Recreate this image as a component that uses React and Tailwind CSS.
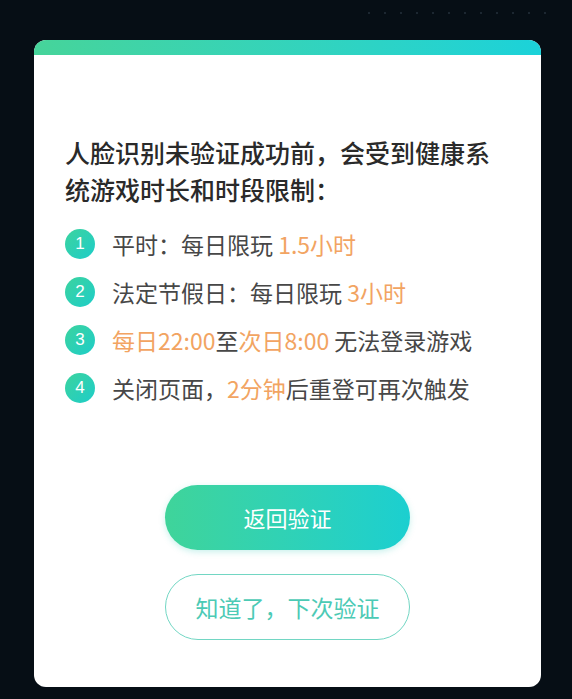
import React from 'react';

const cjk = { fontFamily: '"Noto Sans CJK SC", "Noto Sans", sans-serif' };

const items = [
    { n: 1, parts: [['平时：每日限玩 ', false], ['1.5小时', true]] },
    { n: 2, parts: [['法定节假日：每日限玩 ', false], ['3小时', true]] },
    { n: 3, parts: [['每日22:00', true], ['至', false], ['次日8:00', true], [' 无法登录游戏', false]] },
    { n: 4, parts: [['关闭页面，', false], ['2分钟', true], ['后重登可再次触发', false]] },
];

const App = () => {
    return (
        <div className="w-[572px] h-[699px] bg-[#060e15] overflow-hidden" style={cjk}>
            {/* decorative dots */}
            <div className="h-[40px] flex justify-end items-start pt-[12px] pr-[26px] gap-[14px]">
                {Array.from({ length: 12 }).map((_, i) => (
                    <span key={i} className="w-[2px] h-[2px] rounded-full bg-[#25313b]" />
                ))}
            </div>

            <div className="ml-[34px] w-[507px] h-[647px] bg-white rounded-[12px] overflow-hidden flex flex-col">
                <div className="h-[15px] bg-gradient-to-r from-[#46d49a] to-[#1bd2d9]" />

                <div className="pl-[31px] pr-[30px] pt-[79px]">
                    <h1 className="text-[25px] leading-[37px] font-medium text-[#2a2a2a] w-[446px]">
                        人脸识别未验证成功前，会受到健康系统游戏时长和时段限制：
                    </h1>

                    <ul className="mt-[12px]">
                        {items.map((item) => (
                            <li key={item.n} className="h-[48px] flex items-center">
                                <span
                                    className="w-[30px] h-[30px] rounded-full bg-gradient-to-br from-[#3bd39e] to-[#1ccdc8] text-white text-[17px] flex items-center justify-center shrink-0"
                                    style={{ fontFamily: '"Liberation Sans", sans-serif' }}
                                >
                                    {item.n}
                                </span>
                                <span className="ml-[17px] text-[23px] text-[#474747] whitespace-nowrap">
                                    {item.parts.map(([t, hi], i) => (
                                        <span key={i} className={hi ? 'text-[#f2a462]' : ''}>{t}</span>
                                    ))}
                                </span>
                            </li>
                        ))}
                    </ul>
                </div>

                <div className="flex flex-col items-center mt-[73px] gap-[24px]">
                    <button className="w-[245px] h-[65px] rounded-full bg-gradient-to-r from-[#3fd49a] to-[#1bcfd0] text-white text-[22px] shadow-[0_2px_6px_rgba(40,200,180,0.25)]">
                        返回验证
                    </button>
                    <button className="w-[245px] h-[66px] rounded-full border-[1.5px] border-[#72d6c3] bg-white text-[#4ccab5] text-[23px]">
                        知道了，下次验证
                    </button>
                </div>
            </div>
        </div>
    );
};

export default App;
